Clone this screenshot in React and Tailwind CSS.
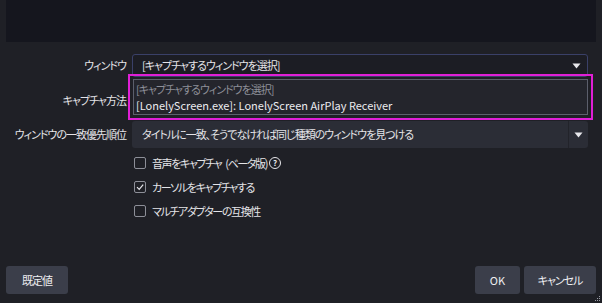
import React from 'react'

const FONT = { fontFamily: '"Noto Sans CJK JP", "Noto Sans", sans-serif' }

function Arrow() {
  return (
    <svg width="9" height="6" viewBox="0 0 9 6" className="shrink-0">
      <path d="M0.5 0.5 H8.5 L4.5 5.5 Z" fill="#e8e8ec" />
    </svg>
  )
}

function CheckBox({ checked, label, suffix, help }) {
  return (
    <div className="flex items-center h-[24px]">
      <div className="w-[12px] h-[12px] border border-[#8d8f98] rounded-[2px] flex items-center justify-center mr-[6px]">
        {checked && (
          <svg width="10" height="10" viewBox="0 0 10 10">
            <path d="M2 5.2 L4.2 7.4 L8.2 2.6" fill="none" stroke="#e6e6ea" strokeWidth="1.2" />
          </svg>
        )}
      </div>
      <span className="text-[11px] tracking-[-1.4px] text-[#e4e4e8] [font-feature-settings:'palt']">{label}</span>
      {suffix && (
        <span className="ml-[4px] text-[11px] tracking-[-1.4px] text-[#e4e4e8] [font-feature-settings:'palt']">{suffix}</span>
      )}
      {help && (
        <div className="ml-[2px] w-[12px] h-[12px] rounded-full border-[1.5px] border-[#e6e6ea] flex items-center justify-center text-[8px] font-bold text-[#e6e6ea] leading-none">
          ?
        </div>
      )}
    </div>
  )
}

export default function App() {
  return (
    <div className="relative w-[602px] h-[303px] bg-[#1f2026] flex flex-col overflow-hidden" style={FONT}>
      {/* preview */}
      <div className="mx-[6px] h-[42px] bg-[#15161e] shrink-0" />

      {/* form */}
      <div className="flex-1 pt-[12px]">
        {/* window */}
        <div className="flex items-center h-[23px]">
          <div className="w-[127px] pr-[1px] text-right text-[11px] tracking-[-1px] text-[#e4e4e8] [font-feature-settings:'palt']">ウィンドウ</div>
          <div className="ml-[5px] w-[456px] h-full flex items-center justify-between pl-[9px] pr-[6px] bg-[#1c1d24] border border-[#3a4068] rounded-[3px]">
            <span className="text-[11px] tracking-[-1px] text-[#e4e4e8] [font-feature-settings:'palt']">[キャプチャするウィンドウを選択]</span>
            <Arrow />
          </div>
        </div>

        {/* capture method */}
        <div className="relative flex items-center h-[38px] mt-[4px]">
          <div className="w-[127px] pr-[1px] text-right text-[11px] tracking-[-1px] text-[#e4e4e8] [font-feature-settings:'palt']">キャプチャ方法</div>
          {/* popup list */}
          <div className="absolute left-[128px] top-[-7px] w-[465px] h-[46px] border-2 border-[#e01fd6] p-[3px]">
            <div className="h-full bg-[#24252c] border border-[#5c5f6c] flex flex-col justify-center px-[2px]">
              <div className="h-[16px] flex items-center text-[11px] tracking-[-1px] text-[#8d8f98] [font-feature-settings:'palt']">[キャプチャするウィンドウを選択]</div>
              <div className="h-[16px] flex items-center text-[11px] text-[#ececf0]">[LonelyScreen.exe]: LonelyScreen AirPlay Receiver</div>
            </div>
          </div>
        </div>

        {/* priority */}
        <div className="flex items-center h-[27px] mt-[2px]">
          <div className="w-[127px] pr-[1px] text-right text-[11px] tracking-[-1px] text-[#e4e4e8] [font-feature-settings:'palt']">ウィンドウの一致優先順位</div>
          <div className="ml-[5px] w-[456px] h-full flex items-center bg-[#2b2d36] rounded-[3px]">
            <span className="flex-1 pl-[10px] text-[11px] tracking-[-1px] text-[#e4e4e8] [font-feature-settings:'palt']">タイトルに一致、そうでなければ同じ種類のウィンドウを見つける</span>
            <div className="w-[20px] h-full border-l border-[#22232a] flex items-center justify-center">
              <Arrow />
            </div>
          </div>
        </div>

        {/* checkboxes */}
        <div className="pl-[134px] mt-[3px]">
          <CheckBox label="音声をキャプチャ" suffix="(ベータ版)" help />
          <CheckBox checked label="カーソルをキャプチャする" />
          <CheckBox label="マルチアダプターの互換性" />
        </div>
      </div>

      {/* footer */}
      <div className="flex items-center justify-between px-[6px] pb-[9px]">
        <button className="w-[62px] h-[28px] bg-[#3b3e4a] rounded-[3px] text-[11px] tracking-[-1px] text-[#eeeef2]">既定値</button>
        <div className="flex gap-[4px]">
          <button className="w-[45px] h-[28px] bg-[#3b3e4a] rounded-[3px] text-[11px] text-[#eeeef2]">OK</button>
          <button className="w-[72px] h-[28px] bg-[#3b3e4a] rounded-[3px] text-[11px] tracking-[-1px] text-[#eeeef2] [font-feature-settings:'palt']">キャンセル</button>
        </div>
      </div>

      {/* resize grip */}
      <svg className="absolute right-[1px] bottom-[1px]" width="6" height="6" viewBox="0 0 6 6">
        <rect x="4" y="0" width="1" height="1" fill="#9a9ca5" />
        <rect x="2" y="2" width="1" height="1" fill="#9a9ca5" />
        <rect x="4" y="2" width="1" height="1" fill="#9a9ca5" />
        <rect x="0" y="4" width="1" height="1" fill="#9a9ca5" />
        <rect x="2" y="4" width="1" height="1" fill="#9a9ca5" />
        <rect x="4" y="4" width="1" height="1" fill="#9a9ca5" />
      </svg>
    </div>
  )
}
